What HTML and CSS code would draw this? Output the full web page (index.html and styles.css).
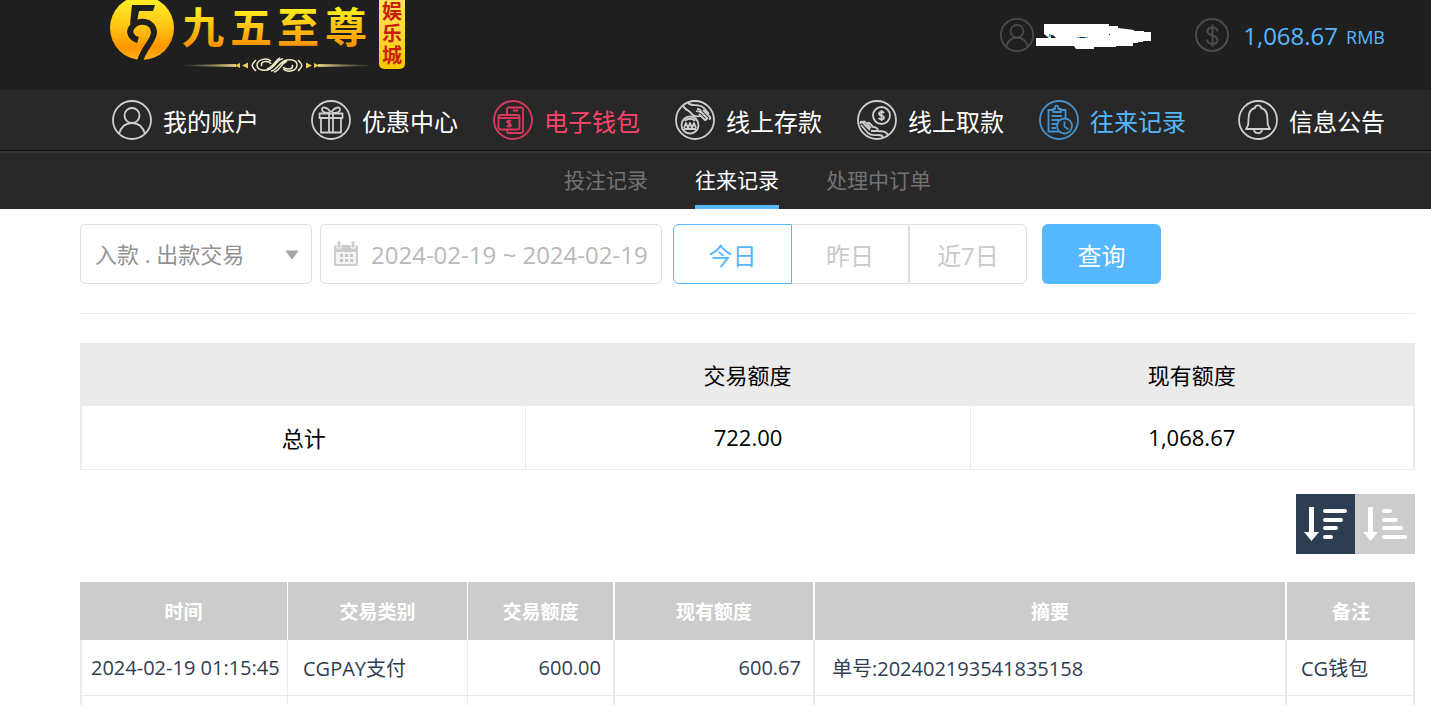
FILE: index.html
```
<!DOCTYPE html>
<html lang="zh-CN">
<head>
<meta charset="utf-8">
<meta name="viewport" content="width=device-width, initial-scale=1">
<title>往来记录</title>
<link rel="stylesheet" href="styles.css">
</head>
<body>
<header class="topbar">
  <a class="logo" href="#" aria-label="九五至尊娱乐城">
    <svg width="296" height="76" viewBox="0 0 296 76">
      <defs>
        <linearGradient id="gold" x1="0" y1="0" x2="0" y2="1"><stop offset="0" stop-color="#fff22a"/><stop offset=".45" stop-color="#ffc814"/><stop offset=".8" stop-color="#ff9500"/><stop offset="1" stop-color="#ffb41e"/></linearGradient>
        <linearGradient id="goldText" gradientUnits="userSpaceOnUse" x1="0" y1="8" x2="0" y2="47"><stop offset="0" stop-color="#fff01e"/><stop offset=".5" stop-color="#ffc010"/><stop offset="1" stop-color="#ff9000"/></linearGradient>
        <linearGradient id="badge" x1="0" y1="0" x2="0" y2="1"><stop offset="0" stop-color="#ffe45c"/><stop offset=".5" stop-color="#ffd93c"/><stop offset="1" stop-color="#f5c800"/></linearGradient>
        <linearGradient id="rule" gradientUnits="userSpaceOnUse" x1="72" y1="0" x2="262" y2="0"><stop offset="0" stop-color="#f3dc8a" stop-opacity="0"/><stop offset=".3" stop-color="#f3dc8a"/><stop offset=".7" stop-color="#f3dc8a"/><stop offset="1" stop-color="#f3dc8a" stop-opacity="0"/></linearGradient>
      </defs>
      <circle cx="32" cy="28" r="32" fill="url(#gold)"/>
      <path d="M22 5H45L43 11H29L27 21L20 24Z" fill="#1f1f1f"/>
      <path d="M28 40C21 38 18 32 22 27C28 19 43 20 44 32C44 41 34 47 30 61" fill="none" stroke="#1f1f1f" stroke-width="6"/>
      <g class="logo-name" fill="url(#goldText)">
        <text x="72" y="43">九</text><text x="120" y="43">五</text><text x="167" y="43">至</text><text x="215" y="43">尊</text>
      </g>
      <path d="M72 65L126 64V67L72 66ZM262 65L208 64V67L262 66Z" fill="url(#rule)"/>
      <path d="M125 65.500l5-2.500v5ZM132 65.500l6-3v6ZM209 65.500l-5-2.500v5ZM202 65.500l-6-3v6Z" fill="#f0d040"/>
      <path d="M146 60C141 65 141 66 146 71M188 60C193 65 193 66 188 71M161 61C156 57 147 60 147 65C147 71 156 71 160 69C166 66 168 58 173 59M152 66C149 61 159 60 161 64M173 69C178 73 187 71 187 65C187 59 178 59 174 61C168 64 166 71 161 71M182 65C185 70 175 70 173 67M157 69C164 67 165 60 170 58M177 61C170 64 170 71 164 72" fill="none" stroke="#f1ebc8" stroke-width="1.500"/>
      <rect x="269" y="-8" width="26" height="77" rx="5" fill="url(#badge)"/>
      <g class="logo-badge"><text x="272" y="19">娱</text><text x="272" y="41">乐</text><text x="272" y="63">城</text></g>
    </svg>
  </a>
  <div class="account">
    <svg class="round" width="34" height="34" viewBox="0 0 40 40"><circle cx="20" cy="20" r="19"/><circle cx="20" cy="15.500" r="7.500"/><path d="M7 34C9 27 14 23 20 23S31 27 33 34"/></svg>
    <svg class="mask" width="116" height="28" viewBox="0 0 116 28"><path d="M8 3H73V5H82V7L98 9V10H108V11H115V20H107V21H102V22H97V25H80V26H58V28H40L38 25H0V17H13L8 13Z" fill="#fff"/><path d="M13 13h2v3h-2zM41 16h3v1h-3zM49 16h3v1h-3z" fill="#55b8ff"/><path d="M15 14h2l3 3h-5zM44 16h5v1h-5zM73 13h1v1h-1z" fill="#222"/></svg>
    <svg class="round money" width="34" height="34" viewBox="0 0 34 34"><circle cx="17" cy="17" r="16"/><path d="M17.500 6.500V29M22.500 13.500C22 8 12.500 8 12.500 13.500C12.500 18 22.500 16.500 22.500 22C22.500 27.500 12.500 27.500 12 21.500"/></svg>
    <span class="balance">1,068.67</span><span class="currency">RMB</span>
  </div>
</header>
<nav class="mainnav" aria-label="主导航">
  <a href="#"><svg viewBox="0 0 40 40"><circle cx="20" cy="20" r="19"/><circle cx="20" cy="15.500" r="7.500"/><path d="M7 34C9 27 14 23 20 23S31 27 33 34"/></svg>我的账户</a>
  <a href="#"><svg viewBox="0 0 40 40"><circle cx="20" cy="20" r="19"/><path d="M8.500 13.500H31.500V18H8.500ZM10 18V32.500H30V18M18 13.500V32.500M22 13.500V32.500M19 13C15 13 11 12 11 9.500C11 6.500 16 6.500 19.500 12M21 13C25 13 29 12 29 9.500C29 6.500 24 6.500 20.500 12"/></svg>优惠中心</a>
  <a class="hot" href="#"><svg viewBox="0 0 40 40"><circle cx="20" cy="20" r="19"/><rect x="5.500" y="15" width="21" height="14.500" rx="2"/><path d="M5.500 18H26.500M14 15V9.500Q14 7.500 16 7.500H28Q30 7.500 30 9.500V31Q30 33 28 33H16Q14 33 14 31V29.500M20 10.500H25M18 21.500C17 20 14 20.500 14 22C14 23.500 18 23 18 25C18 27 14.500 27 13.500 25.500M16 20V27.500"/></svg>电子钱包</a>
  <a href="#"><svg viewBox="0 0 40 40"><circle cx="20" cy="20" r="19"/><circle cx="15" cy="25" r="8.500"/><path d="M9 28L11 23L13 28L15 23L17 28L19 23L21 28M9 29H21M10 21C12 18 18 18 20 21M8 5C9 10 14 10 16 13C18 16 22 17 26 16M13 3C17 7 24 3 29 8L34 14M22 9C25 9 27 11 25 12L21 11M26 12L33 19M24 14L30 20Q32 20 31 18M28 10L35 17Q36 19 34 19"/></svg>线上存款</a>
  <a href="#"><svg viewBox="0 0 40 40"><circle cx="20" cy="20" r="19"/><circle cx="24.500" cy="15.500" r="8.500"/><path d="M27 13C26 11 22 11.500 22 14C22 16 27 15 27 17.500C27 20 23 20 21.500 18M24.500 10V21M3.500 24C3 21 5 21 7 24L13 30M7 24C5 20 8 21 10 24L14 28M11 25C10 20 14 24 16 27C20 27 22 30 20 31H14M4 25L11 33C14 36 17 35 21 35C25 35 26 37 26 38M20 31C25 31 30 31 31 36"/></svg>线上取款</a>
  <a class="current" href="#"><svg viewBox="0 0 40 40"><circle cx="20" cy="20" r="19"/><path d="M14 10H9.500V31.500H20M21 10H26.500V18M14 9H16C15 4.500 20 4.500 19.500 9H22V12H14ZM12.500 16H23M12.500 20H21M12.500 24H18M12.500 28H17M25.500 21.500V26.500L29.500 29.500"/><circle cx="25.500" cy="26" r="7.500"/></svg>往来记录</a>
  <a href="#"><svg viewBox="0 0 40 40"><circle cx="20" cy="20" r="19"/><path d="M17 8C17 4.500 23 4.500 23 8C28 9 29.500 14 29.500 19C29.500 25 30 26 32 29H8C10 26 10.500 25 10.500 19C10.500 14 12 9 17 8ZM16 29C16 34.500 24 34.500 24 29"/></svg>信息公告</a>
</nav>
<nav class="subnav" aria-label="记录类型">
  <a href="#">投注记录</a>
  <a class="selected" href="#">往来记录</a>
  <a href="#">处理中订单</a>
</nav>
<main class="content">
  <form class="filters">
    <div class="type">
      <select aria-label="交易类型"><option>入款 . 出款交易</option></select>
      <svg class="caret" width="14" height="10" viewBox="0 0 14 10"><path d="M1 1H13L7 9Z" fill="#a5a5a5" stroke="#a5a5a5"/></svg>
    </div>
    <label class="date">
      <svg width="26" height="26" viewBox="0 0 26 26"><path d="M3 4H23Q25 4 25 6V23Q25 25 23 25H3Q1 25 1 23V6Q1 4 3 4Z" fill="#ccc"/><path d="M3 11H23V23H3Z" fill="#f4f4f4"/><path d="M4 0H8V7H4ZM18 0H22V7H18Z" fill="#ccc" stroke="#fff"/><path d="M7 13h3v3H7zM12 13h3v3h-3zM17 13h3v3h-3zM7 18h3v3H7zM12 18h3v3h-3zM17 18h3v3h-3z" fill="#c4c4c4"/></svg>
      <input type="text" aria-label="日期范围" value="2024-02-19 ~ 2024-02-19" readonly>
    </label>
    <div class="range">
      <button class="active" type="button">今日</button><button type="button">昨日</button><button type="button">近7日</button>
    </div>
    <button class="search" type="button">查询</button>
  </form>
  <table class="summary">
    <thead><tr><th></th><th>交易额度</th><th>现有额度</th></tr></thead>
    <tbody><tr><td>总计</td><td>722.00</td><td>1,068.67</td></tr></tbody>
  </table>
  <div class="sort">
    <button class="desc" type="button" aria-label="降序"><svg width="59" height="60" viewBox="0 0 59 60"><path d="M13 13H18V38H23L15.500 47L8 38H13Z"/><path d="M29 17H49M29 26H45M29 34H40M29 43H35"/></svg></button>
    <button class="asc" type="button" aria-label="升序"><svg width="59" height="60" viewBox="0 0 59 60"><path d="M13 13H18V38H23L15.500 47L8 38H13Z"/><path d="M29 17H35M29 26H41M29 34H46M29 43H50"/></svg></button>
  </div>
  <table class="records">
    <colgroup><col class="c-time"><col class="c-kind"><col class="c-amount"><col class="c-balance"><col><col class="c-note"></colgroup>
    <thead><tr><th>时间</th><th>交易类别</th><th>交易额度</th><th>现有额度</th><th>摘要</th><th>备注</th></tr></thead>
    <tbody>
      <tr><td>2024-02-19 01:15:45</td><td>CGPAY支付</td><td>600.00</td><td>600.67</td><td>单号:202402193541835158</td><td>CG钱包</td></tr>
      <tr><td></td><td></td><td></td><td></td><td></td><td></td></tr>
    </tbody>
  </table>
</main>
</body>
</html>
```
FILE: styles.css
```
* { box-sizing: border-box; }
html { scrollbar-width: none; }
body {
  margin: 0;
  background: #fff;
  font-family: "Open Sans", "Noto Sans CJK SC", sans-serif;
  color: #000;
}
a { color: inherit; text-decoration: none; }
button, input, select { font: inherit; }
button { margin: 0; padding: 0; cursor: pointer; }
svg { display: block; flex: none; }

.topbar {
  display: flex;
  justify-content: space-between;
  height: 90px;
  padding: 0 46px 0 110px;
  background: #1f1f1f;
}
.logo svg { overflow: visible; }
.logo-name { font: 700 42px "Noto Sans CJK SC", sans-serif; }
.logo-badge { font: 700 20px "Noto Sans CJK SC", sans-serif; fill: #c81e0a; }
.account {
  display: flex;
  align-items: center;
  height: 70px;
  color: #55b8ff;
}
.round { fill: none; stroke: #4c4c4c; stroke-width: 2; }
.mask { margin-left: 2px; }
.money { margin: 0 14px 0 43px; }
.balance { font-size: 24px; }
.currency { margin-left: 8px; font-size: 18px; padding-top: 4px; }

.mainnav {
  display: flex;
  justify-content: space-between;
  height: 61px;
  padding: 0 46px 0 112px;
  background: #282828;
  border-bottom: 1px solid #0e0e0e;
  color: #fff;
  font-size: 24px;
  white-space: nowrap;
}
.mainnav a { display: flex; align-items: center; gap: 11px; }
.mainnav a:first-child { margin-right: 17px; }
.mainnav a:last-child { margin-left: 17px; }
.mainnav svg { width: 40px; height: 40px; fill: none; stroke: #cfcfcf; stroke-width: 1.8; stroke-linejoin: round; }
.mainnav .hot { color: #ff446c; }
.mainnav .hot svg { stroke: #d93a5c; }
.mainnav .current { color: #55b8ff; }
.mainnav .current svg { stroke: #4592cc; }

.subnav {
  display: flex;
  justify-content: center;
  gap: 47px;
  height: 58px;
  padding: 0 16px 0 80px;
  background: #282828;
  border-top: 2px solid #343434;
  color: #737373;
  font-size: 21px;
  line-height: 54px;
}
.subnav .selected { color: #fff; border-bottom: 4px solid #55b8ff; }

.content { padding: 15px 16px 0 80px; }
.filters {
  display: flex;
  padding-bottom: 29px;
  border-bottom: 1px solid #ebebeb;
}
.type { position: relative; width: 232px; height: 60px; }
.type select {
  width: 100%;
  height: 100%;
  padding: 0 40px 0 14px;
  appearance: none;
  background: #fff;
  border: 1px solid #ddd;
  border-radius: 6px;
  color: #929292;
  font-size: 22px;
}
.caret { position: absolute; right: 13px; top: 26px; pointer-events: none; }
.date {
  display: flex;
  align-items: center;
  gap: 12px;
  width: 342px;
  margin: 0 11px 0 8px;
  padding: 0 2px 0 12px;
  border: 1px solid #ddd;
  border-radius: 6px;
}
.date input {
  flex: 1;
  min-width: 0;
  padding: 0;
  border: 0;
  background: none;
  color: #b9b9b9;
  font-size: 24px;
}
.range { display: flex; }
.range button {
  width: 117px;
  background: #fff;
  border: 1px solid #ddd;
  border-left-width: 0;
  color: #c9c9c9;
  font-size: 24px;
}
.range .active { width: 119px; border: 1px solid #55b8ff; border-radius: 6px 0 0 6px; color: #55b8ff; }
.range button:last-child { width: 118px; border-left-width: 1px; border-radius: 0 6px 6px 0; }
.search {
  width: 119px;
  margin-left: 15px;
  border: 0;
  border-radius: 6px;
  background: #55b8ff;
  color: #fff;
  font-size: 24px;
}

table { width: 100%; table-layout: fixed; border-collapse: separate; border-spacing: 0; }
th, td { padding: 0; }
.summary { margin-top: 29px; border: 1px solid #ebebeb; font-size: 22px; text-align: center; }
.summary th { height: 62px; background: #ebebeb; font-weight: 400; }
.summary td { height: 63px; border-left: 1px solid #ebebeb; }
.summary td:last-child { border-right: 1px solid #ebebeb; }
.summary th, .summary td { padding-bottom: 2px; }

.sort { display: flex; justify-content: flex-end; margin: 24px 0 28px; }
.sort button { border: 0; height: 60px; }
.sort svg { fill: #fff; stroke: #fff; stroke-linecap: round; stroke-width: 4; }
.sort svg path:first-child { stroke-width: 0; }
.desc { width: 59px; background: #2e3e52; }
.asc { width: 60px; background: #ccc; }

.c-time { width: 207px; }
.c-kind { width: 180px; }
.c-amount { width: 146px; }
.c-balance { width: 200px; }
.c-note { width: 130px; }
.records { color: #2e3e52; font-size: 20px; white-space: nowrap; }
.records th {
  height: 58px;
  background: #ccc;
  border-left: 1px solid #fff;
  color: #fff;
  font-size: 19px;
  font-weight: 700;
}
.records th:first-child { border-left: 0; }
.records td { height: 56px; padding: 0 15px; border-left: 1px solid #ebebeb; border-bottom: 1px solid #ebebeb; }
.records th:nth-child(n+4), .records td:nth-child(n+4) { border-left-width: 2px; }
.records td:first-child { padding: 0 0 0 9px; border-left-width: 2px; }
.records td:last-child { padding: 0 0 0 14px; border-right: 2px solid #ebebeb; }
.records td:nth-child(3), .records td:nth-child(4) { padding: 0 12px; text-align: right; }
.records td:nth-child(5) { padding-left: 17px; }
```
